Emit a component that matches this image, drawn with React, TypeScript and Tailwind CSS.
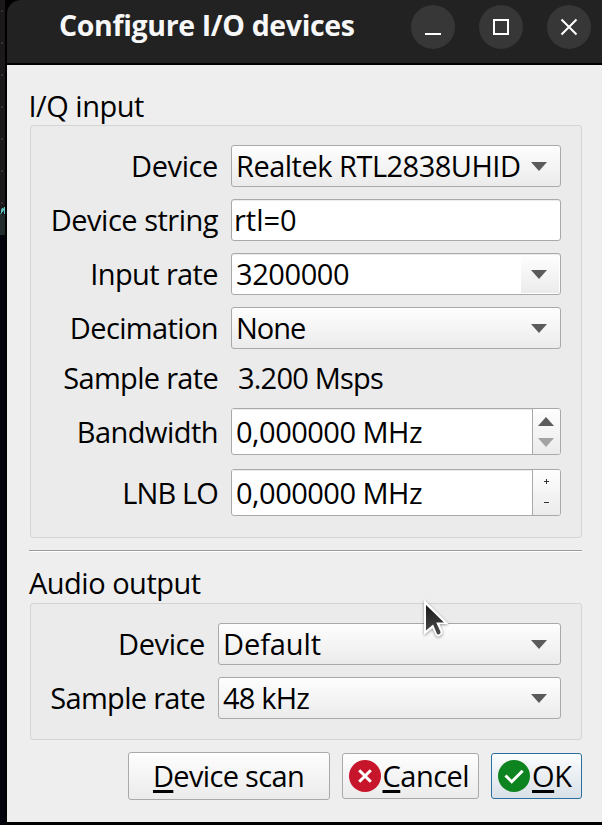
import type { ReactNode } from 'react';

const raised = 'bg-linear-to-b from-[#fefefe] to-[#ebebeb]';
const frame = 'border border-[#a9a9a9] rounded-[3px]';

function Triangle({ up = false, className = 'fill-[#5b5b5b]' }: { up?: boolean; className?: string }) {
  return (
    <svg width="16" height="9" viewBox="0 0 16 9" className={`block ${className}`}>
      <path d={up ? 'M0 9 L8 0 L16 9 Z' : 'M0 0 L16 0 L8 9 Z'} />
    </svg>
  );
}

function Row({ label, tracking, labelWidth, children, className = 'h-[42px]' }: {
  label: string; tracking: string; labelWidth: string; children: ReactNode; className?: string;
}) {
  return (
    <div className={`flex items-center ${className}`}>
      <div className={`${labelWidth} shrink-0 flex justify-end whitespace-nowrap pb-px mr-[13px]`}>
        <span className={tracking}>{label}</span>
      </div>
      {children}
    </div>
  );
}

function Combo({ text, tracking, editable = false }: { text: string; tracking: string; editable?: boolean }) {
  return (
    <div className={`h-[42px] min-w-0 flex-1 flex items-center ${frame} ${editable ? 'bg-white shadow-[inset_0_1px_0_#ececec]' : raised}`}>
      <div className="min-w-0 flex-1 overflow-hidden whitespace-nowrap leading-[39px] pb-px pl-1">
        <span className={tracking}>{text}</span>
      </div>
      <div className={`shrink-0 flex items-center pl-[10px] ${editable ? `h-[38px] mr-px w-[38px] ${raised}` : 'h-full w-[39px]'}`}>
        <Triangle />
      </div>
    </div>
  );
}

function Spin({ text, children }: { text: string; children: ReactNode }) {
  return (
    <div className={`h-[47px] flex-1 flex bg-white ${frame}`}>
      <div className="flex-1 flex items-center pl-1 shadow-[inset_0_1px_0_#ececec]">
        <span className="tracking-[-0.51px]">{text}</span>
      </div>
      <div className={`w-[28px] border-l border-[#a9a9a9] rounded-r-[2px] flex flex-col items-start ${raised}`}>{children}</div>
    </div>
  );
}

function TitleButton({ children }: { children: ReactNode }) {
  return (
    <button className="size-11 rounded-full bg-[#373737] flex items-center justify-center">
      <svg width="20" height="20" viewBox="0 0 20 20" fill="none" stroke="#ffffff" strokeWidth="2">{children}</svg>
    </button>
  );
}

function Mnemonic({ children }: { children: ReactNode }) {
  return <span className="underline decoration-[3px] underline-offset-[3px] [text-decoration-skip-ink:none]">{children}</span>;
}

function Backdrop() {
  return (
    <div className="w-[7px] shrink-0 flex flex-col bg-[#02020d] border-r-2 border-black">
      <div className="h-[207px] bg-[#1c191a] bg-[radial-gradient(circle_at_2px_11px,#333_0.8px,transparent_1px)] bg-size-[5px_32px]" />
      <svg width="5" height="8" viewBox="0 0 5 8" className="block bg-[#1c191a]" fill="none" stroke="#5fc4c4">
        <path d="M0 7.5 L1.5 6 V3 L2.5 1 V5 L4.5 0 V7" />
      </svg>
      <div className="h-[20px] bg-[#222c2d]" />
    </div>
  );
}

export default function App() {
  return (
    <div className="relative w-[602px] h-[825px] flex overflow-hidden bg-black text-black text-[29px] leading-none font-['Open_Sans','Noto_Sans',sans-serif]">
      <Backdrop />
      <div className="w-[595px] flex flex-col">
        <header className="h-[65px] shrink-0 bg-[#222222] border-b-2 border-black flex items-start rounded-tl-[14px]">
          <h1 className="w-[404px] h-[51px] pl-[52px] flex items-center font-bold text-[#f7f7f7] text-[28.5px] whitespace-nowrap tracking-[-0.35px]">
            Configure I/O devices
          </h1>
          <div className="flex gap-6 pt-[5px]">
            <TitleButton><path d="M2 17 H18" /></TitleButton>
            <TitleButton><rect x="3" y="3" width="14" height="14" /></TitleButton>
            <TitleButton><path d="M2.5 2.5 L17.5 17.5 M17.5 2.5 L2.5 17.5" /></TitleButton>
          </div>
        </header>

        <main className="h-[757px] bg-[#eeeeee] pl-[23px] pr-5 pt-[21px] flex flex-col">
          <h2 className="h-[39px] flex items-center -ml-[1.5px] tracking-[-0.5px]">I/Q input</h2>
          <section className="h-[413px] border border-[#d4d4d4] rounded-[3px] bg-[#ebebeb] pt-[19px] pr-5 flex flex-col">
            <Row label="Device" tracking="tracking-[-0.4px]" labelWidth="w-[187px]">
              <Combo text="Realtek RTL2838UHIDIR" tracking="tracking-[-0.5px]" />
            </Row>
            <Row label="Device string" tracking="tracking-[-0.5px]" labelWidth="w-[187px]" className="h-[42px] mt-3">
              <div className={`h-[42px] flex-1 flex items-center bg-white pl-[2px] pb-px shadow-[inset_0_1px_0_#ececec] ${frame}`}>rtl=0</div>
            </Row>
            <Row label="Input rate" tracking="tracking-[-0.62px]" labelWidth="w-[187px]" className="h-[42px] mt-3">
              <Combo text="3200000" tracking="tracking-[-0.41px]" editable />
            </Row>
            <Row label="Decimation" tracking="tracking-[-0.62px]" labelWidth="w-[187px]" className="h-[42px] mt-3">
              <Combo text="None" tracking="tracking-[-1.02px]" />
            </Row>
            <Row label="Sample rate" tracking="tracking-[-0.7px]" labelWidth="w-[187px]" className="h-[57px] mb-[2px]">
              <span className="pl-[7px] tracking-[-0.8px]">3.200 Msps</span>
            </Row>
            <Row label="Bandwidth" tracking="tracking-[-0.53px]" labelWidth="w-[187px]" className="h-[47px]">
              <Spin text="0,000000 MHz">
                <div className="pt-[8px] pl-[5px]"><Triangle up /></div>
                <div className="pt-[12px] pl-[5px]"><Triangle className="fill-[#a3a3a3]" /></div>
              </Spin>
            </Row>
            <Row label="LNB LO" tracking="tracking-[-0.88px]" labelWidth="w-[187px]" className="h-[47px] mt-[14px]">
              <Spin text="0,000000 MHz">
                <svg width="27" height="45" viewBox="0 0 27 45" stroke="#333333" fill="none">
                  <path d="M11 11.5 H16 M13.5 9 V14 M11 32.5 H16" />
                </svg>
              </Spin>
            </Row>
          </section>

          <div className="mt-3 -ml-px h-[2px] shrink-0 border-t border-t-[#9b9b9b] border-b border-b-white" />

          <h2 className="mt-[11px] h-[40px] pb-px flex items-center -ml-[1px] tracking-[-0.5px]">Audio output</h2>
          <section className="h-[137px] border border-[#d4d4d4] rounded-[3px] bg-[#ebebeb] pt-[19px] pr-5 flex flex-col">
            <Row label="Device" tracking="tracking-[-0.4px]" labelWidth="w-[174px]">
              <Combo text="Default" tracking="tracking-[-0.1px]" />
            </Row>
            <Row label="Sample rate" tracking="tracking-[-0.7px]" labelWidth="w-[174px]" className="h-[42px] mt-3">
              <Combo text="48 kHz" tracking="tracking-[-0.8px]" />
            </Row>
          </section>

          <div className="h-[72px] flex items-center justify-end gap-3">
            <button className={`w-[202px] h-12 flex items-center justify-center ${frame} ${raised}`}>
              <span className="tracking-[-0.67px] whitespace-nowrap mb-px mr-px"><Mnemonic>D</Mnemonic>evice scan</span>
            </button>
            <button className={`w-[137px] h-[46px] pl-[6px] flex items-center ${frame} ${raised}`}>
              <svg width="32" height="32" viewBox="0 0 32 32" fill="none">
                <circle cx="16" cy="16" r="16" fill="#c7162b" />
                <path d="M10.2 10.2 L21.8 21.8 M21.8 10.2 L10.2 21.8" stroke="#fff" strokeWidth="3" />
              </svg>
              <span className="pl-[1.5px] tracking-[-0.5px] mb-px"><Mnemonic>C</Mnemonic>ancel</span>
            </button>
            <button className="w-[91px] h-[46px] pl-[6px] flex items-center rounded-[3px] border border-[#2a6f9e] bg-linear-to-b from-[#fcfdfe] to-[#d8e0e7]">
              <svg width="32" height="32" viewBox="0 0 32 32" fill="none">
                <circle cx="16" cy="16" r="16" fill="#0e8420" />
                <path d="M7.5 15.5 L13.7 21.7 L24.7 10.7" stroke="#fff" strokeWidth="3" />
              </svg>
              <span className="pl-[2px] tracking-[-0.4px] mb-px"><Mnemonic>O</Mnemonic>K</span>
            </button>
          </div>
        </main>
      </div>

      <svg width="36" height="48" viewBox="0 0 36 48" className="absolute left-[420px] top-[596px] drop-shadow-[0_1px_1.5px_rgba(0,0,0,0.4)]">
        <defs>
          <linearGradient id="pointer" x1="0" y1="0" x2="0" y2="1">
            <stop offset="0" stopColor="#1b1b1b" />
            <stop offset="1" stopColor="#4a4a4a" />
          </linearGradient>
        </defs>
        <path d="M4 3.5 L28.5 28 H19.5 L22.8 36 Q23 38.5 19.8 40 Q16.8 41.5 15.5 38.5 L12.5 32 L4 39 Z" fill="#fff" />
        <path d="M6 9 L24 26.5 H16.2 L20.6 36 Q20.8 37.4 19.2 38.2 Q17.6 39 16.8 37.4 L13.1 28.5 L6 34.5 Z" fill="url(#pointer)" />
      </svg>
    </div>
  );
}
